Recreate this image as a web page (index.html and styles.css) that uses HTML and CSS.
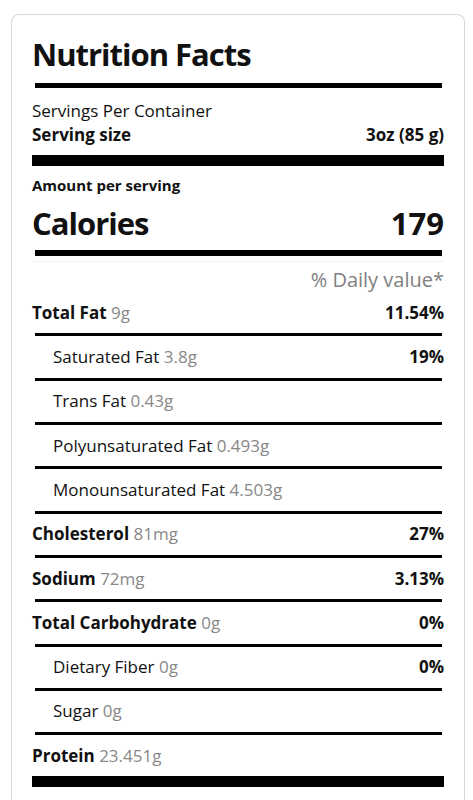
FILE: index.html
```html
<!DOCTYPE html>
<html lang="en">
<head>
    <meta charset="UTF-8">
    <meta name="viewport" content="width=device-width, initial-scale=1.0">
    <title>Nutrition Facts</title>
    <link rel="stylesheet" href="styles.css">
</head>
<body>
    <div class="label">
        <h1 class="title">Nutrition Facts</h1>
        <div class="rule rule-medium"></div>
        <div class="servings">Servings Per Container</div>
        <div class="row-plain">
            <span class="bold">Serving size</span>
            <span class="bold">3oz (85 g)</span>
        </div>
        <div class="rule rule-thick"></div>
        <div class="amount">Amount per serving</div>
        <div class="calories">
            <span>Calories</span>
            <span>179</span>
        </div>
        <div class="rule rule-medium"></div>
        <div class="rule-faint"></div>
        <div class="daily">% Daily value*</div>

        <div class="row">
            <span><b>Total Fat</b> <span class="qty">9g</span></span>
            <b>11.54%</b>
        </div>
        <div class="rule"></div>
        <div class="row sub">
            <span>Saturated Fat <span class="qty">3.8g</span></span>
            <b>19%</b>
        </div>
        <div class="rule"></div>
        <div class="row sub">
            <span>Trans Fat <span class="qty">0.43g</span></span>
        </div>
        <div class="rule"></div>
        <div class="row sub">
            <span>Polyunsaturated Fat <span class="qty">0.493g</span></span>
        </div>
        <div class="rule"></div>
        <div class="row sub">
            <span>Monounsaturated Fat <span class="qty">4.503g</span></span>
        </div>
        <div class="rule"></div>
        <div class="row">
            <span><b>Cholesterol</b> <span class="qty">81mg</span></span>
            <b>27%</b>
        </div>
        <div class="rule"></div>
        <div class="row">
            <span><b>Sodium</b> <span class="qty">72mg</span></span>
            <b>3.13%</b>
        </div>
        <div class="rule"></div>
        <div class="row">
            <span><b>Total Carbohydrate</b> <span class="qty">0g</span></span>
            <b>0%</b>
        </div>
        <div class="rule"></div>
        <div class="row sub">
            <span>Dietary Fiber <span class="qty">0g</span></span>
            <b>0%</b>
        </div>
        <div class="rule"></div>
        <div class="row sub">
            <span>Sugar <span class="qty">0g</span></span>
        </div>
        <div class="rule"></div>
        <div class="row">
            <span><b>Protein</b> <span class="qty">23.451g</span></span>
        </div>
        <div class="rule rule-thick"></div>
    </div>
</body>
</html>
```

FILE: styles.css
```css
body {
    font-family: "Open Sans", "Noto Sans", Arial, sans-serif;
    margin: 0;
    padding: 14px 8px 0 11px;
    background-color: #ffffff;
    color: #111111;
}
.label {
    border: 1px solid #d8d8d8;
    border-bottom: none;
    border-radius: 8px 8px 0 0;
    padding: 20px 20px 20px 20px;
    height: 800px;
}
.title {
    margin: 0;
    font-size: 31px;
    line-height: 38px;
    font-weight: 700;
    letter-spacing: -1px;
}
.rule {
    height: 3px;
    background-color: #000000;
    margin: 0 2px 0 3px;
}
.rule-medium {
    height: 5px;
}
.title + .rule-medium {
    margin-top: 10px;
}
.rule-thick {
    height: 11px;
    margin: 0;
}
.rule-faint {
    height: 1px;
    background-color: #f0f0f0;
    margin-top: 5px;
}
.servings {
    margin-top: 11px;
    font-size: 17px;
    line-height: 24px;
}
.row-plain {
    display: flex;
    justify-content: space-between;
    font-size: 17px;
    line-height: 24px;
    margin-bottom: 8px;
}
.bold {
    font-weight: 700;
}
.amount {
    margin-top: 9px;
    font-size: 15px;
    line-height: 20px;
    font-weight: 700;
}
.calories {
    display: flex;
    justify-content: space-between;
    margin-top: 10px;
    margin-bottom: 9px;
    font-size: 31px;
    line-height: 36px;
    font-weight: 700;
}
.calories span:first-child {
    letter-spacing: -1px;
}
.calories + .rule-medium {
    height: 6px;
}
.daily {
    margin-top: 6px;
    text-align: right;
    font-size: 20px;
    line-height: 24px;
    color: #808080;
}
.row {
    display: flex;
    justify-content: space-between;
    font-size: 17px;
    line-height: 24px;
    padding: 8.67px 0;
}
.row b {
    font-weight: 700;
}
.sub {
    padding-left: 21px;
}
.qty {
    color: #888888;
}
```
